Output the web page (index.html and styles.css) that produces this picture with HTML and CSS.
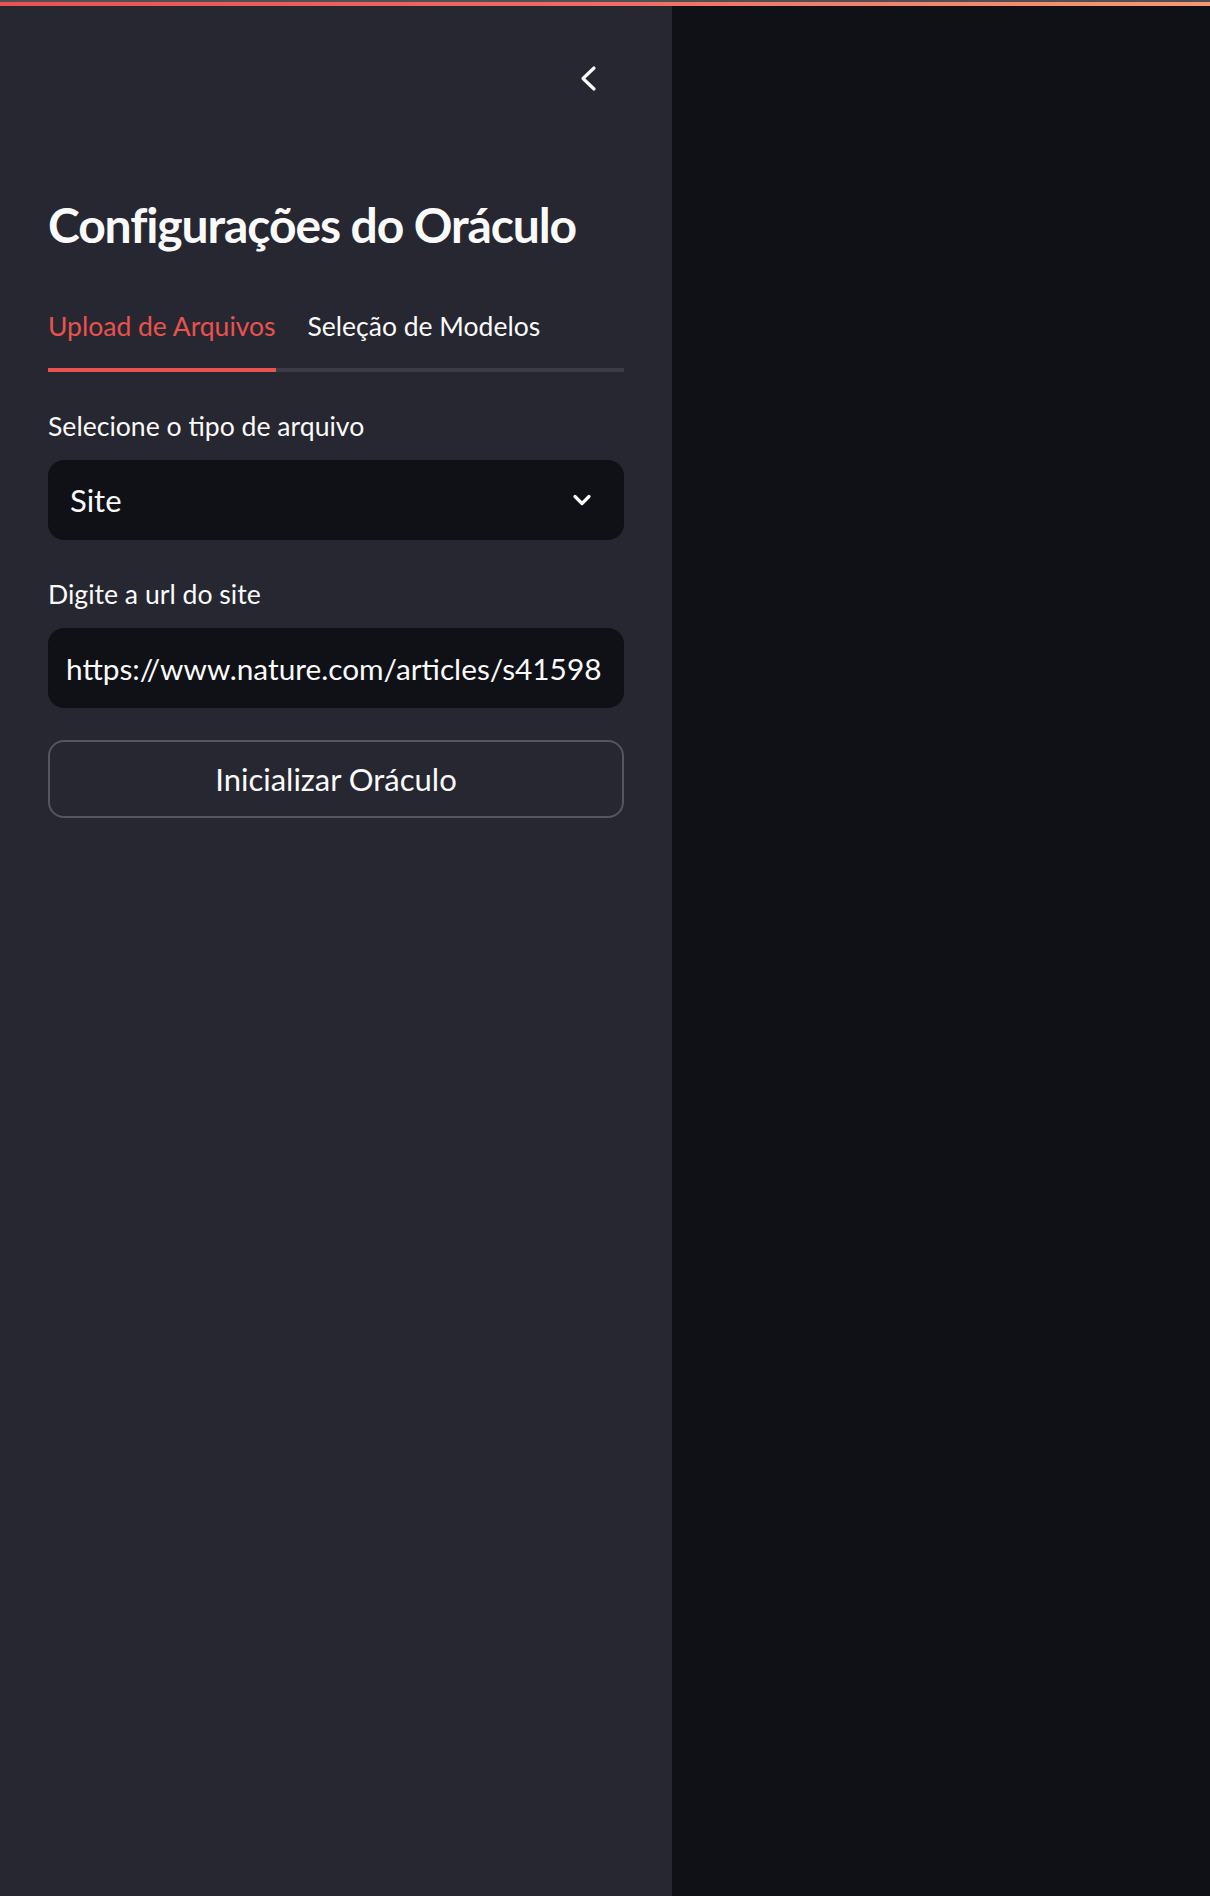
FILE: index.html
```html
<!DOCTYPE html>
<html lang="pt-BR">
<head>
<meta charset="utf-8">
<title>Oráculo</title>
<link rel="stylesheet" href="styles.css">
</head>
<body>
<div class="topbar"></div>
<div class="app">
  <aside class="sidebar">
    <div class="sidebar-header">
      <button class="collapse" aria-label="Recolher barra lateral">
        <svg width="48" height="48" viewBox="0 0 48 48" aria-hidden="true"><polyline points="30,14 19,24.5 30,35" fill="none" stroke="#fafafa" stroke-width="3.2" stroke-linecap="round" stroke-linejoin="round"/></svg>
      </button>
    </div>
    <div class="sidebar-content">
      <h1 class="title">Configurações do Oráculo</h1>
      <div class="tabs" role="tablist">
        <button class="tab active" role="tab">Upload de Arquivos</button>
        <button class="tab" role="tab">Seleção de Modelos</button>
      </div>
      <div class="panel">
        <div class="field">
          <label class="label">Selecione o tipo de arquivo</label>
          <div class="select">
            <span>Site</span>
            <svg width="20" height="14" viewBox="0 0 20 14" aria-hidden="true"><polyline points="3,3.5 10,10.5 17,3.5" fill="none" stroke="#fafafa" stroke-width="3.2" stroke-linecap="round" stroke-linejoin="round"/></svg>
          </div>
        </div>
        <div class="field">
          <label class="label" for="url">Digite a url do site</label>
          <input id="url" class="input" type="text" value="https://www.nature.com/articles/s41598-024-56789-1">
        </div>
        <button class="btn">Inicializar Oráculo</button>
      </div>
    </div>
  </aside>
  <main class="main"></main>
</div>
</body>
</html>
```
FILE: styles.css
```css
html, body {
  margin: 0;
  padding: 0;
}
body {
  background: #0f1117;
  color: #fafafa;
  font-family: Lato, "Noto Sans", sans-serif;
  height: 1896px;
  overflow: hidden;
}
.topbar {
  height: 4px;
  border-top: 2px solid #4e4f56;
  background: linear-gradient(90deg, #e9524f 0%, #ee6c60 50%, #f07c68 65%, #f39a72 100%);
}
.app {
  display: flex;
  height: 1890px;
}
.sidebar {
  width: 672px;
  flex: none;
  box-sizing: border-box;
  background: #262730;
  padding: 0 48px;
}
.sidebar-header {
  display: flex;
  justify-content: flex-end;
  padding-top: 48px;
}
.collapse {
  width: 48px;
  height: 48px;
  padding: 0;
  margin-right: 12px;
  border: 0;
  background: none;
  display: flex;
}
.title {
  margin: 93px 0 0;
  font-size: 48px;
  line-height: 60px;
  letter-spacing: -1.1px;
  font-weight: 700;
  white-space: nowrap;
  color: #fafafa;
}
.tabs {
  margin-top: 29px;
  display: flex;
  gap: 32px;
  border-bottom: 4px solid #3b3c45;
}
.tab {
  background: none;
  border: 0;
  border-bottom: 4px solid transparent;
  margin-bottom: -4px;
  padding: 0;
  font-family: inherit;
  font-size: 26.5px;
  line-height: 84px;
  color: #fafafa;
}
.tab.active {
  color: #ea524f;
  border-bottom-color: #ea524f;
}
.panel {
  margin-top: 30px;
  display: flex;
  flex-direction: column;
  gap: 30px;
}
.field {
  display: flex;
  flex-direction: column;
}
.label {
  font-size: 26.6px;
  line-height: 48px;
  margin-bottom: 10px;
}
.select {
  height: 80px;
  box-sizing: border-box;
  background: #0f1117;
  border-radius: 16px;
  padding: 0 32px 0 22px;
  display: flex;
  align-items: center;
  justify-content: space-between;
  font-size: 31px;
}
.input {
  height: 80px;
  width: 100%;
  box-sizing: border-box;
  background: #0f1117;
  border: 0;
  border-radius: 16px;
  padding: 0 22px 0 18px;
  font-family: inherit;
  font-size: 29.8px;
  color: #fafafa;
  outline: none;
}
.btn {
  margin-top: 2px;
  height: 78px;
  box-sizing: border-box;
  background: transparent;
  border: 2px solid #55565f;
  border-radius: 16px;
  font-family: inherit;
  font-size: 31px;
  color: #fafafa;
}
.main {
  flex: 1;
  background: #0f1117;
}
```
